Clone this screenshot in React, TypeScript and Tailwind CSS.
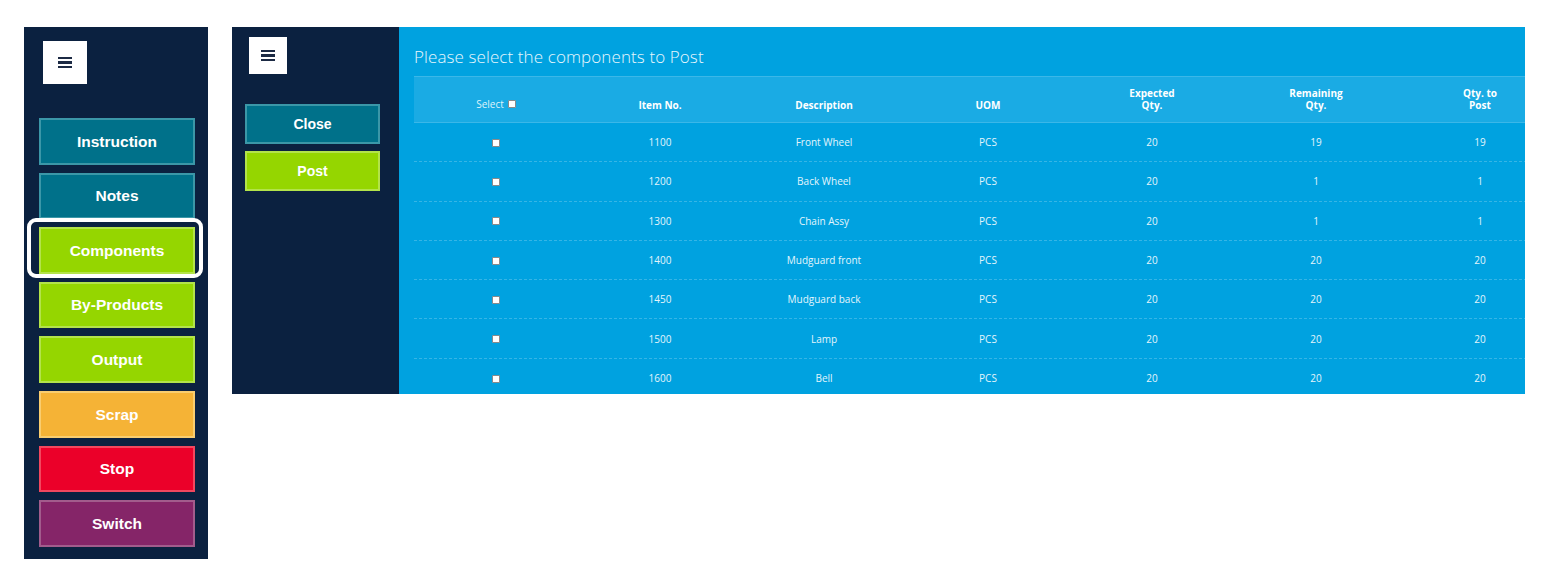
import React from 'react';

const navBtns = [
  { label: 'Instruction', cls: 'bg-[#00718a] border-[#3b97a8]' },
  { label: 'Notes', cls: 'bg-[#00718a] border-[#3b97a8]' },
  { label: 'Components', cls: 'bg-[#95d600] border-[#b3e34a]', active: true },
  { label: 'By-Products', cls: 'bg-[#95d600] border-[#b3e34a]' },
  { label: 'Output', cls: 'bg-[#95d600] border-[#b3e34a]' },
  { label: 'Scrap', cls: 'bg-[#f5b336] border-[#f9cd6f]' },
  { label: 'Stop', cls: 'bg-[#eb0029] border-[#f2475e]' },
  { label: 'Switch', cls: 'bg-[#852568] border-[#a25c8c]' },
];

const rows = [
  ['1100', 'Front Wheel', 'PCS', '20', '19', '19'],
  ['1200', 'Back Wheel', 'PCS', '20', '1', '1'],
  ['1300', 'Chain Assy', 'PCS', '20', '1', '1'],
  ['1400', 'Mudguard front', 'PCS', '20', '20', '20'],
  ['1450', 'Mudguard back', 'PCS', '20', '20', '20'],
  ['1500', 'Lamp', 'PCS', '20', '20', '20'],
  ['1600', 'Bell', 'PCS', '20', '20', '20'],
];

const Burger: React.FC<{ size: string }> = ({ size }) => (
  <div className={`${size} bg-white flex flex-col items-center justify-center gap-[2px]`}>
    <span className="block w-[14px] h-[2.5px] bg-[#1c2a44]" />
    <span className="block w-[14px] h-[2.5px] bg-[#1c2a44]" />
    <span className="block w-[14px] h-[2.5px] bg-[#1c2a44]" />
  </div>
);

const Box = () => (
  <span className="inline-block w-[8px] h-[8px] bg-white border border-[#8a8a8a] rounded-[1px]" />
);

export default function App() {
  const btnFont = { fontFamily: '"Liberation Sans", Arial, sans-serif' };
  const tblFont = { fontFamily: '"Open Sans", "Noto Sans", sans-serif' };
  return (
    <div className="w-[1568px] h-[588px] bg-white flex items-start gap-[24px] pl-[24px] pt-[27px]" style={btnFont}>
      {/* left nav */}
      <div className="w-[184px] h-[532px] bg-[#0b2140] flex flex-col pl-[15px]">
        <div className="mt-[14px] ml-[4px]">
          <Burger size="w-[44px] h-[43px]" />
        </div>
        <div className="mt-[34px] flex flex-col gap-[8px]">
          {navBtns.map((b) => (
            <div key={b.label} className="relative w-[156px]">
              <div className={`h-[46.6px] border-2 ${b.cls} text-white font-bold text-[15.5px] flex items-center justify-center`}>
                {b.label}
              </div>
              {b.active && (
                <div className="absolute -left-[12px] -top-[9px] w-[176px] h-[60px] border-[4px] border-white rounded-[9px]" />
              )}
            </div>
          ))}
        </div>
      </div>

      {/* right panel */}
      <div className="w-[1293px] h-[367px] flex overflow-hidden">
        <div className="w-[167px] bg-[#0b2140] flex flex-col pl-[13px]">
          <div className="mt-[10px] ml-[4px]">
            <Burger size="w-[38px] h-[37px]" />
          </div>
          <div className="mt-[30px] flex flex-col gap-[7px]">
            <div className="w-[135px] h-[40px] bg-[#00718a] border-2 border-[#3b97a8] text-white font-bold text-[14px] flex items-center justify-center">
              Close
            </div>
            <div className="w-[135px] h-[40px] bg-[#95d600] border-2 border-[#b3e34a] text-white font-bold text-[14px] flex items-center justify-center">
              Post
            </div>
          </div>
        </div>
        <div className="flex-1 bg-[#00a2e0] pl-[15px] overflow-hidden" style={tblFont}>
          <div className="h-[49px] flex items-center pt-[11px] text-[#e8f7fd] text-[17px] font-light tracking-[0.1px]">
            Please select the components to Post
          </div>
          <div className="w-[1148px]">
            <div className="grid grid-cols-[repeat(7,164px)] h-[47px] bg-[#1aabe4] border-t border-b border-[#3bb7e8] text-white text-[10px] font-bold leading-[12px] items-end pb-[11px] text-center">
              <div className="flex items-center justify-center gap-[4px] font-normal text-[#dff3fb] pb-[1px]">
                Select <Box />
              </div>
              <div>Item No.</div>
              <div>Description</div>
              <div>UOM</div>
              <div>Expected<br />Qty.</div>
              <div>Remaining<br />Qty.</div>
              <div>Qty. to<br />Post</div>
            </div>
            {rows.map((r, i) => (
              <div
                key={r[0]}
                className={`grid grid-cols-[repeat(7,164px)] h-[39.3px] items-center text-center text-[10px] text-[#e3f5fc] pt-[1px] ${i < rows.length - 1 ? 'border-b border-dashed border-[#36b5e6]' : ''}`}
              >
                <div className="flex justify-center"><Box /></div>
                {r.map((c, j) => (
                  <div key={j}>{c}</div>
                ))}
              </div>
            ))}
          </div>
        </div>
      </div>
    </div>
  );
}
